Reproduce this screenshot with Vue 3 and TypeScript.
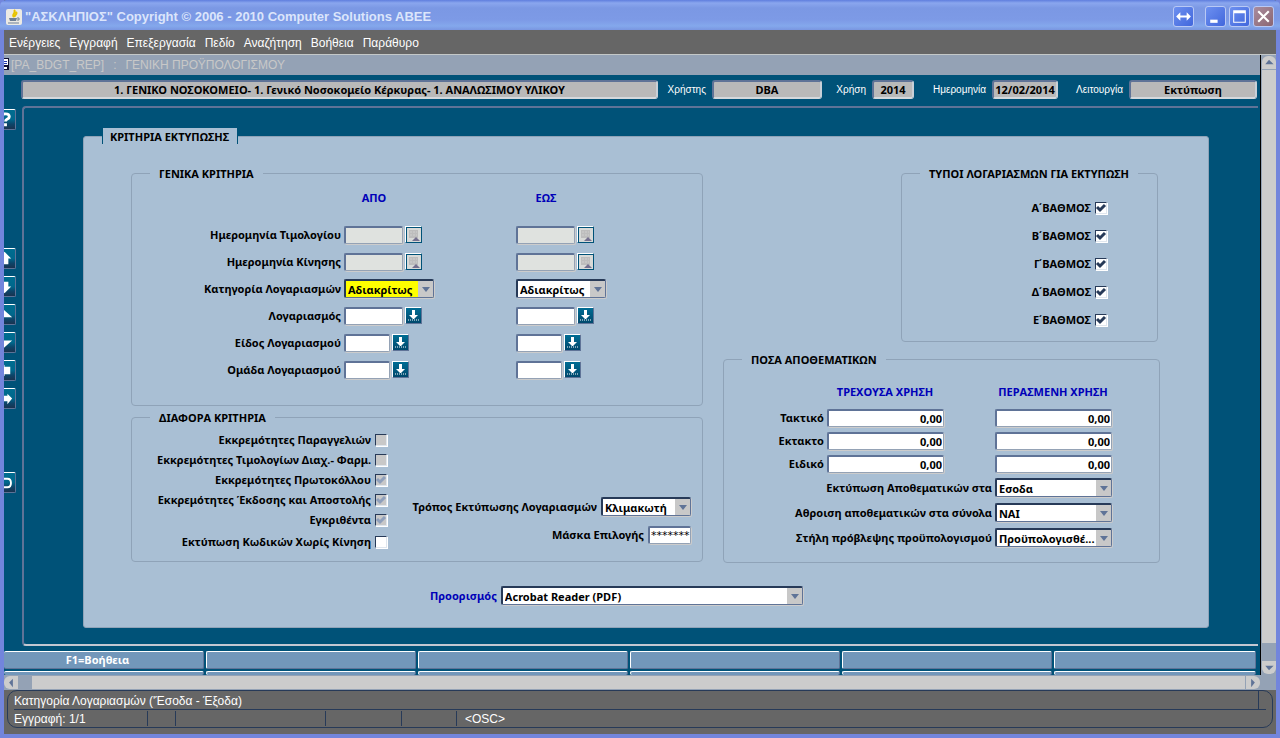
<script setup lang="ts">
import { ref } from 'vue'

interface CriteriaRow {
  id: string
  label: string
  kind: 'date' | 'combo' | 'wide' | 'narrow'
}

const menu = ['Ενέργειες', 'Εγγραφή', 'Επεξεργασία', 'Πεδίο', 'Αναζήτηση', 'Βοήθεια', 'Παράθυρο']

const tools = [
  { name: 'Προηγούμενη εγγραφή', d: 'M9 3 L16 10 H13 V16 H6 V10 H3 Z' },
  { name: 'Επόμενη εγγραφή', d: 'M9 17 L16 10 H13 V5 H6 V10 H3 Z' },
  { name: 'Προηγούμενη σελίδα', d: 'M8 5 L17 13 H3 Z' },
  { name: 'Επόμενη σελίδα', d: 'M8 16 L17 8 H3 Z' },
  { name: 'Προηγούμενο πεδίο', d: 'M3 10 L9 4 V6 H15 V14 H9 V16 Z' },
  { name: 'Επόμενο πεδίο', d: 'M17 10 L12 5 V7 H5 V13 H12 V16 Z' },
]

const sides = [
  { key: 'from', title: 'ΑΠΟ' },
  { key: 'to', title: 'ΕΩΣ' },
]

const criteria: CriteriaRow[] = [
  { id: 'invoice-date', label: 'Ημερομηνία Τιμολογίου', kind: 'date' },
  { id: 'move-date', label: 'Ημερομηνία Κίνησης', kind: 'date' },
  { id: 'category', label: 'Κατηγορία Λογαριασμών', kind: 'combo' },
  { id: 'account', label: 'Λογαριασμός', kind: 'wide' },
  { id: 'kind', label: 'Είδος Λογαριασμού', kind: 'narrow' },
  { id: 'group', label: 'Ομάδα Λογαριασμού', kind: 'narrow' },
]

const options = ref([
  { label: 'Εκκρεμότητες Παραγγελιών', on: false, locked: true },
  { label: 'Εκκρεμότητες Τιμολογίων Διαχ.- Φαρμ.', on: false, locked: true },
  { label: 'Εκκρεμότητες Πρωτοκόλλου', on: true, locked: true },
  { label: 'Εκκρεμότητες Έκδοσης και Αποστολής', on: true, locked: true },
  { label: 'Εγκριθέντα', on: true, locked: true },
  { label: 'Εκτύπωση Κωδικών Χωρίς Κίνηση', on: false, locked: false },
])

const grades = ref([
  { label: 'Α΄ΒΑΘΜΟΣ', on: true },
  { label: 'Β΄ΒΑΘΜΟΣ', on: true },
  { label: 'Γ΄ΒΑΘΜΟΣ', on: true },
  { label: 'Δ΄ΒΑΘΜΟΣ', on: true },
  { label: 'Ε΄ΒΑΘΜΟΣ', on: true },
])

const amounts = ref([
  { label: 'Τακτικό', current: '0,00', past: '0,00' },
  { label: 'Εκτακτο', current: '0,00', past: '0,00' },
  { label: 'Ειδικό', current: '0,00', past: '0,00' },
])

const reserveChoices = [
  { label: 'Εκτύπωση Αποθεματικών στα', value: 'Εσοδα' },
  { label: 'Αθροιση αποθεματικών στα σύνολα', value: 'ΝΑΙ' },
  { label: 'Στήλη πρόβλεψης προϋπολογισμού', value: 'Προϋπολογισθέ...' },
]

const mask = ref('*******')
const functionKeys = ['F1=Βοήθεια', '', '', '', '', '']
</script>

<template>
  <div class="window">
    <header class="titlebar">
      <svg class="app-icon" viewBox="0 0 16 16" aria-hidden="true">
        <rect x="0" y="0" width="16" height="16" rx="2" fill="#eceae4" />
        <path d="M8 1 C11 4 5 5 8 8 M10 3 C12 5 8 6 9 8" stroke="#e8c400" stroke-width="2" fill="none" />
        <path d="M3 9 H11 L10 12 H4 Z" fill="#6d7f96" />
        <path d="M11 9 H13 V11 H11 M2 14 H13" stroke="#6d7f96" fill="none" />
      </svg>
      <h1>"ΑΣΚΛΗΠΙΟΣ" Copyright © 2006 - 2010 Computer Solutions ABEE</h1>
      <div class="window-buttons">
        <button type="button" class="span-button" aria-label="Μετακίνηση">
          <svg viewBox="0 0 18 18"><path d="M2 9 L6 5 V8 H12 V5 L16 9 L12 13 V10 H6 V13 Z" fill="#fff" /></svg>
        </button>
        <button type="button" aria-label="Ελαχιστοποίηση">
          <svg viewBox="0 0 18 18"><rect x="4" y="12" width="7" height="3" fill="#fff" /></svg>
        </button>
        <button type="button" aria-label="Μεγιστοποίηση">
          <svg viewBox="0 0 18 18"><path d="M3 3 H15 V15 H3 Z M4 6 V14 H14 V6 Z" fill="#fff" fill-rule="evenodd" /></svg>
        </button>
        <button type="button" class="close" aria-label="Κλείσιμο">
          <svg viewBox="0 0 18 18"><path d="M4 4 L14 14 M14 4 L4 14" stroke="#fff" stroke-width="2" /></svg>
        </button>
      </div>
    </header>

    <nav class="menubar">
      <button v-for="item in menu" :key="item" type="button">{{ item }}</button>
    </nav>

    <div class="workspace">
      <main class="canvas">
        <div class="form-title">
          <svg viewBox="0 0 6 14" aria-hidden="true">
            <path d="M0 0 H5 V12 H0 Z" fill="#101030" />
            <path d="M0 1 H4 V7 H0 Z M0 9 H3 V11 H0 Z" fill="#fff" />
            <path d="M0 3 H3 V4 H0 Z M0 5 H3 V6 H0 Z" fill="#2038b0" />
          </svg>
          <span class="form-code">[PA_BDGT_REP]</span>
          <span class="form-colon">:</span>
          <span>ΓΕΝΙΚΗ ΠΡΟΫΠΟΛΟΓΙΣΜΟΥ</span>
        </div>

        <div class="context">
          <output>1. ΓΕΝΙΚΟ ΝΟΣΟΚΟΜΕΙΟ- 1. Γενικό Νοσοκομείο Κέρκυρας- 1. ΑΝΑΛΩΣΙΜΟΥ ΥΛΙΚΟΥ</output>
          <label for="ctx-user">Χρήστης</label>
          <output id="ctx-user">DBA</output>
          <label for="ctx-year">Χρήση</label>
          <output id="ctx-year">2014</output>
          <label for="ctx-date">Ημερομηνία</label>
          <output id="ctx-date">12/02/2014</output>
          <label for="ctx-mode">Λειτουργία</label>
          <output id="ctx-mode">Εκτύπωση</output>
        </div>

        <div class="body">
          <div class="toolbar">
            <button type="button" class="tool help" aria-label="Βοήθεια">
              <svg viewBox="0 0 20 20"><path d="M6 7 C6 3 14 3 14 7 C14 10 10 9 10 12 M10 14 V17" stroke="#fff" stroke-width="3" fill="none" /></svg>
            </button>
            <button v-for="tool in tools" :key="tool.name" type="button" class="tool" :aria-label="tool.name">
              <svg viewBox="0 0 20 20"><path :d="tool.d" fill="#fff" /></svg>
            </button>
            <button type="button" class="tool exit" aria-label="Έξοδος">
              <svg viewBox="0 0 20 20"><path d="M7 6 H12 C17 6 17 15 12 15 H7" stroke="#fff" stroke-width="2" fill="none" /></svg>
            </button>
          </div>

          <div class="frame">
            <form class="panel" @submit.prevent>
              <h2 class="panel-title">ΚΡΙΤΗΡΙΑ ΕΚΤΥΠΩΣΗΣ</h2>

              <div class="groups">
                <div class="column left">
                  <fieldset class="general">
                    <legend>ΓΕΝΙΚΑ ΚΡΙΤΗΡΙΑ</legend>
                    <div class="criteria heads">
                      <span></span>
                      <span v-for="side in sides" :key="side.key" class="head">{{ side.title }}</span>
                    </div>
                    <div v-for="row in criteria" :key="row.id" class="criteria">
                      <label :for="row.id + '-from'">{{ row.label }}</label>
                      <div v-for="side in sides" :key="side.key" class="entry">
                        <span v-if="row.kind === 'combo'" class="combo" :class="{ active: side.key === 'from' }">
                          <select :id="row.id + '-' + side.key" :aria-label="row.label + ' ' + side.title">
                            <option>Αδιακρίτως</option>
                          </select>
                          <svg viewBox="0 0 15 16" aria-hidden="true"><path d="M4 6 H12 L8 11 Z" /></svg>
                        </span>
                        <template v-else>
                          <input
                            :id="row.id + '-' + side.key"
                            type="text"
                            :class="row.kind"
                            :disabled="row.kind === 'date'"
                            :aria-label="row.label + ' ' + side.title"
                          />
                          <button
                            type="button"
                            class="lookup"
                            :class="{ calendar: row.kind === 'date' }"
                            :aria-label="'Επιλογή ' + row.label"
                          >
                            <svg v-if="row.kind === 'date'" viewBox="0 0 15 15">
                              <path d="M3 3 H12 V11 H3 Z" fill="#bdbdbd" />
                              <path d="M4 5 H11 M4 8 H11" stroke="#cfcfcf" stroke-dasharray="2 1" fill="none" />
                              <path d="M6 14 L10 10 L14 14 Z" fill="#75708f" />
                            </svg>
                            <svg v-else viewBox="0 0 15 15">
                              <path d="M6 2 H9 V7 H12 L8 11 H7 L3 7 H6 Z" fill="#fff" />
                              <path d="M2 12 H13" stroke="#fff" stroke-dasharray="1 1" />
                            </svg>
                          </button>
                        </template>
                      </div>
                    </div>
                  </fieldset>

                  <fieldset class="misc">
                    <legend>ΔΙΑΦΟΡΑ ΚΡΙΤΗΡΙΑ</legend>
                    <div class="misc-grid">
                      <div class="checks">
                        <label v-for="option in options" :key="option.label">
                          {{ option.label }}
                          <span class="check">
                            <input v-model="option.on" type="checkbox" :disabled="option.locked" />
                            <svg viewBox="0 0 12 12" aria-hidden="true"><path d="M2 5 L5 8 L10 3" /></svg>
                          </span>
                        </label>
                      </div>
                      <div class="print-mode">
                        <div>
                          <label for="print-mode">Τρόπος Εκτύπωσης Λογαριασμών</label>
                          <span class="combo">
                            <select id="print-mode"><option>Κλιμακωτή</option></select>
                            <svg viewBox="0 0 15 16" aria-hidden="true"><path d="M4 6 H12 L8 11 Z" /></svg>
                          </span>
                        </div>
                        <div>
                          <label for="mask">Μάσκα Επιλογής</label>
                          <input id="mask" v-model="mask" type="text" class="mask" />
                        </div>
                      </div>
                    </div>
                  </fieldset>
                </div>

                <div class="column right">
                  <fieldset class="types">
                    <legend>ΤΥΠΟΙ ΛΟΓΑΡΙΑΣΜΩΝ ΓΙΑ ΕΚΤΥΠΩΣΗ</legend>
                    <div class="checks">
                      <label v-for="grade in grades" :key="grade.label">
                        {{ grade.label }}
                        <span class="check">
                          <input v-model="grade.on" type="checkbox" />
                          <svg viewBox="0 0 12 12" aria-hidden="true"><path d="M2 5 L5 8 L10 3" /></svg>
                        </span>
                      </label>
                    </div>
                  </fieldset>

                  <fieldset class="reserves">
                    <legend>ΠΟΣΑ ΑΠΟΘΕΜΑΤΙΚΩΝ</legend>
                    <div class="amount heads">
                      <span></span>
                      <span class="head">ΤΡΕΧΟΥΣΑ ΧΡΗΣΗ</span>
                      <span class="head">ΠΕΡΑΣΜΕΝΗ ΧΡΗΣΗ</span>
                    </div>
                    <div v-for="(row, i) in amounts" :key="row.label" class="amount">
                      <label :for="'amount-' + i">{{ row.label }}</label>
                      <input :id="'amount-' + i" v-model="row.current" type="text" />
                      <input v-model="row.past" type="text" :aria-label="row.label + ' περασμένη χρήση'" />
                    </div>
                    <div v-for="(choice, i) in reserveChoices" :key="choice.label" class="amount choice">
                      <label :for="'choice-' + i">{{ choice.label }}</label>
                      <span class="combo">
                        <select :id="'choice-' + i"><option>{{ choice.value }}</option></select>
                        <svg viewBox="0 0 15 16" aria-hidden="true"><path d="M4 6 H12 L8 11 Z" /></svg>
                      </span>
                    </div>
                  </fieldset>
                </div>
              </div>

              <div class="target">
                <label for="target">Προορισμός</label>
                <span class="combo">
                  <select id="target"><option>Acrobat Reader (PDF)</option></select>
                  <svg viewBox="0 0 15 16" aria-hidden="true"><path d="M4 6 H12 L8 11 Z" /></svg>
                </span>
              </div>
            </form>
          </div>
        </div>

        <div class="fkeys">
          <button v-for="(key, i) in functionKeys" :key="i" type="button">{{ key }}</button>
        </div>
        <div class="fkeys next">
          <button v-for="(key, i) in functionKeys" :key="i" type="button" :aria-label="'Πλήκτρο ' + (i + 7)"></button>
        </div>
      </main>

      <div class="vscroll" aria-hidden="true">
        <svg class="up" viewBox="0 0 14 14"><path d="M3 9 H12 L7 4 Z" /></svg>
        <div class="vthumb"></div>
        <svg class="down" viewBox="0 0 14 14"><path d="M3 5 H12 L7 10 Z" /></svg>
      </div>
    </div>

    <div class="hscroll" aria-hidden="true">
      <svg class="prev" viewBox="0 0 14 14"><path d="M9 3 V12 L5 7 Z" /></svg>
      <div class="hthumb"></div>
      <svg class="next-arrow" viewBox="0 0 14 14"><path d="M5 3 V12 L9 7 Z" /></svg>
    </div>

    <footer class="status">
      <div class="status-box">
        <div class="hint"><span>Κατηγορία Λογαριασμών ('Έσοδα - Έξοδα)</span></div>
        <div class="cells">
          <span>Εγγραφή: 1/1</span><span></span><span></span><span></span><span></span><span>&lt;OSC&gt;</span>
        </div>
      </div>
    </footer>
  </div>
</template>

<style>
body {
  margin: 0;
}
</style>

<style scoped>
.window {
  --teal: #005278;
  --panel: #a9bfd4;
  --steel: #5f7397;
  --haze: #94a2b5;
  --navy: #273a58;
  --silver: #cccccc;
  --ui: "Noto Sans", "DejaVu Sans Condensed", sans-serif;
  --thin: "Liberation Sans", Arial, sans-serif;
  display: flex;
  flex-direction: column;
  box-sizing: border-box;
  min-height: 100vh;
  border: 4px solid #7285dc;
  border-top: 0;
  background: #666;
  font: bold 11px/14px var(--ui);
  color: #000;
}
button,
input,
select {
  font: inherit;
  color: inherit;
  box-sizing: border-box;
  margin: 0;
  padding: 0;
}
button {
  border: 0;
}
svg {
  display: block;
}

.titlebar {
  display: flex;
  align-items: center;
  height: 30px;
  margin: 0 -4px;
  padding: 3px 6px 0;
  box-sizing: border-box;
  border-radius: 6px 6px 0 0;
  background: linear-gradient(#5f7ede 0, #8aa6ee 3px, #7b98e4 8px, #7d9ae6 20px, #84a8ec 26px, #7a96e0);
}
.app-icon {
  width: 16px;
  height: 16px;
}
h1 {
  flex: 1;
  margin: 0 0 0 3px;
  font: bold 13px/18px "Liberation Sans", Arial, sans-serif;
  color: #dbe5fb;
  white-space: nowrap;
}
.window-buttons {
  display: flex;
  gap: 3px;
}
.window-buttons button {
  width: 21px;
  height: 21px;
  border: 1px solid #b9c9f5;
  border-radius: 3px;
  background: linear-gradient(135deg, #6d90f0, #4167dc);
}
.window-buttons .span-button {
  margin-right: 8px;
}
.window-buttons .close {
  background: linear-gradient(135deg, #a98c9e, #8b6672);
}

.menubar {
  display: flex;
  gap: 9px;
  height: 24px;
  padding-left: 5px;
  border-bottom: 1px solid #c4c8c8;
  background: #666;
}
.menubar button {
  background: none;
  font: 12px/26px var(--thin);
  color: #fff;
}

.workspace {
  display: flex;
  flex: 1;
}
.canvas {
  display: flex;
  flex: 1;
  flex-direction: column;
  min-width: 0;
  overflow: hidden;
  border-right: 1px solid #000;
  background: var(--teal);
}
.form-title {
  display: flex;
  align-items: center;
  height: 20px;
  background: var(--haze);
  font: 12px/22px var(--thin);
  color: #c8c8c8;
}
.form-title svg {
  width: 6px;
  height: 14px;
}
.form-code {
  margin: 0 9px 0 1px;
}
.form-colon {
  margin-right: 9px;
}

.context {
  display: grid;
  grid-template-columns: minmax(0, 1fr) 42px 110px 38px 42px 66px 66px 59px 128px;
  gap: 6px;
  align-items: center;
  padding: 5px 3px 7px 17px;
}
.context output {
  box-sizing: border-box;
  height: 19px;
  border: 2px solid;
  border-color: var(--steel) #c8d0d8 #d4d8dc var(--steel);
  border-radius: 3px;
  background: #b9b9b9;
  line-height: 16px;
  text-align: center;
  white-space: nowrap;
}
.context label {
  font: 10px/14px var(--thin);
  color: #fff;
  text-align: right;
  white-space: nowrap;
}

.body {
  display: flex;
  flex: 1;
}
.toolbar {
  display: flex;
  flex-direction: column;
  align-items: flex-end;
  gap: 7px;
  width: 12px;
  margin-right: 6px;
  padding-top: 3px;
  overflow: hidden;
}
.tool {
  flex: none;
  width: 21px;
  height: 21px;
  border: 1px solid;
  border-color: #fff var(--steel) var(--steel) #fff;
  border-radius: 2px;
  background: linear-gradient(#006d90 0, #00678c 50%, #0d4468 75%, #1a3350);
}
.tool svg {
  width: 19px;
  height: 19px;
}
.help {
  margin-bottom: 111px;
}
.exit {
  margin-top: 56px;
}
.frame {
  flex: 1;
  min-width: 0;
  margin-right: 2px;
  padding: 28px 49px 16px 59px;
  border: 2px solid;
  border-color: var(--steel) transparent #c3c8d2 var(--steel);
  border-right: 0;
  border-radius: 4px 0 0 4px;
}
.panel {
  box-sizing: border-box;
  border: 1px solid #8fa3b8;
  border-radius: 3px;
  background: var(--panel);
  padding: 0 48px 22px 47px;
}
.panel-title {
  width: max-content;
  margin: -9px 0 22px -29px;
  padding: 2px 8px 0 7px;
  border: solid var(--teal);
  border-width: 0 1px;
  background: var(--panel);
  font: inherit;
}

.groups {
  display: grid;
  grid-template-columns: minmax(0, 572fr) minmax(0, 437fr);
  gap: 20px;
}
.column {
  display: flex;
  flex-direction: column;
}
.left {
  gap: 4px;
}
.right {
  gap: 10px;
}
fieldset {
  min-width: 0;
  margin: 0;
  padding: 0;
  border: 1px solid #8fa3b8;
  border-radius: 4px;
}
legend {
  margin-left: 18px;
  padding: 1px 9px 0;
}
label {
  text-align: right;
  white-space: nowrap;
}
.head {
  color: #0000b8;
  text-align: center;
  white-space: nowrap;
}

input[type="text"] {
  height: 18px;
  border: 2px solid;
  border-color: var(--steel) var(--haze) var(--haze) var(--steel);
  border-width: 2px 1px 1px 2px;
  border-radius: 2px;
  background: #fff;
  box-shadow: 1px 1px 0 var(--silver);
}
input[type="text"]:disabled {
  background: #dfe2df;
}
.wide,
.date {
  width: 59px;
}
.narrow {
  width: 46px;
}
.combo {
  position: relative;
  display: block;
  width: 90px;
}
.combo select {
  display: block;
  width: 100%;
  height: 19px;
  padding: 1px 16px 0 2px;
  appearance: none;
  border: 2px solid;
  border-color: var(--navy) var(--steel) var(--steel) var(--navy);
  border-width: 2px 1px 1px 2px;
  border-radius: 2px;
  background: #fff;
  box-shadow: 1px 1px 0 var(--silver);
}
.combo.active select {
  background: #ff0;
}
.combo svg {
  position: absolute;
  top: 2px;
  right: 1px;
  width: 15px;
  height: 16px;
  background: #c8c8c8;
  fill: var(--steel);
  pointer-events: none;
}
.lookup {
  width: 17px;
  height: 17px;
  border: 1px solid;
  border-color: #fff var(--steel) var(--steel) #fff;
  background: linear-gradient(#006d94, #00486c);
}
.lookup.calendar {
  border-color: #fff var(--teal) var(--teal) #fff;
  background: #d8dad8;
  box-shadow: inset 1px 1px 0 var(--teal);
}
.lookup svg {
  width: 15px;
  height: 15px;
}

.general {
  padding-bottom: 22px;
}
.criteria {
  display: grid;
  grid-template-columns: minmax(0, 212fr) minmax(0, 172fr) minmax(0, 186fr);
  align-items: center;
  height: 27px;
}
.criteria label {
  padding-right: 3px;
}
.criteria.heads {
  height: 34px;
  margin-bottom: 6px;
}
.criteria .head {
  width: 60px;
}
.entry {
  display: flex;
  align-items: center;
  gap: 2px;
}

.misc-grid {
  display: flex;
  justify-content: space-between;
  padding: 5px 11px 9px 0;
}
.checks label {
  display: flex;
  align-items: center;
  justify-content: flex-end;
  gap: 4px;
  height: 20px;
}
.misc .checks {
  width: 255px;
}
.misc .checks label:last-child {
  margin-top: 2px;
}
.check {
  position: relative;
}
.check input {
  display: block;
  width: 12px;
  height: 12px;
  appearance: none;
  border: 1px solid;
  border-color: var(--navy) #dfe6ee #dfe6ee var(--navy);
  background: #fff;
  box-shadow: 1px 1px 0 #fff;
}
.check input:disabled {
  background: #c8c8c8;
}
.check svg {
  position: absolute;
  inset: 0;
  width: 12px;
  height: 12px;
  fill: none;
  stroke: var(--navy);
  stroke-width: 3;
  visibility: hidden;
  pointer-events: none;
}
.check input:disabled + svg {
  stroke: #8fa0bc;
}
.check input:checked + svg {
  visibility: visible;
}
.print-mode {
  display: flex;
  flex-direction: column;
  justify-content: flex-end;
  gap: 10px;
  padding-bottom: 8px;
}
.print-mode div {
  display: flex;
  align-items: center;
  justify-content: flex-end;
  gap: 4px;
}
.mask {
  width: 43px;
}
input.mask {
  padding-left: 1px;
  font: 11px/14px "DejaVu Sans", sans-serif;
}

.types {
  width: 257px;
  box-sizing: border-box;
  margin: 0 2px 0 auto;
}
.types .checks {
  padding: 13px 50px 7px 0;
}
.types .checks label {
  height: 28px;
}
.reserves {
  padding: 0 47px 12px 0;
}
.amount {
  display: grid;
  grid-template-columns: minmax(0, 1fr) 168px 117px;
  align-items: center;
  height: 23px;
}
.amount input {
  width: 117px;
  padding-right: 1px;
  text-align: right;
}
.amount label {
  padding-right: 3px;
}
.amount.heads {
  height: 24px;
  margin: 13px 0 2px;
}
.amount .head {
  width: 116px;
}
.amount.choice {
  height: 25px;
}
.choice label {
  grid-column: span 2;
}
.choice .combo {
  width: 117px;
}
.choice select {
  padding-right: 0;
}

.target {
  display: flex;
  align-items: center;
  gap: 4px;
  margin: 23px 0 0 299px;
  color: #0000b8;
}
.target .combo {
  width: 302px;
  color: #000;
}

.fkeys {
  display: grid;
  grid-template-columns: 200fr 210fr 210fr 210fr 210fr 202fr;
  gap: 2px;
  padding: 5px 4px 0 0;
}
.fkeys button {
  height: 18px;
  border: 1px solid;
  border-color: #fff var(--steel) var(--steel) #fff;
  border-radius: 2px;
  background: #7297ba;
  color: #fff;
}
.fkeys button:first-child {
  border-left: 0;
  padding-right: 12px;
}
.fkeys.next {
  padding-top: 2px;
}
.fkeys.next button {
  height: 4px;
  border-bottom: 0;
}

.vscroll {
  display: flex;
  flex-direction: column;
  width: 15px;
  padding: 1px 0;
  background: var(--haze);
}
.vscroll svg {
  width: 14px;
  height: 13px;
  margin-left: 1px;
  background: var(--silver);
  fill: var(--steel);
}
.vscroll .up {
  border-radius: 6px 6px 0 0;
}
.vscroll .down {
  border-radius: 0 0 6px 6px;
}
.vthumb {
  flex: 1;
  margin: 1px 0 18px 1px;
  background: var(--silver);
}
.hscroll {
  display: flex;
  height: 13px;
  padding: 1px 16px 1px 0;
  background: var(--haze);
}
.hscroll svg {
  width: 14px;
  height: 13px;
  background: var(--silver);
  fill: var(--steel);
}
.hscroll .prev {
  border-radius: 6px 0 0 6px;
}
.hscroll .next-arrow {
  border-radius: 0 6px 6px 0;
}
.hthumb {
  flex: 1;
  margin: 0 1px 0 14px;
  background: var(--silver);
}

.status {
  padding: 0 3px 6px;
  background: #666;
  font: 12px/18px var(--thin);
  color: #fff;
}
.status-box {
  padding: 0 6px;
  border: 1px solid var(--navy);
  border-radius: 10px;
}
.hint {
  border-bottom: 1px solid var(--navy);
  padding-right: 7px;
}
.hint span {
  display: block;
  height: 18px;
  border-right: 1px solid var(--navy);
  line-height: 20px;
}
.cells {
  display: grid;
  grid-template-columns: 133px 28px 150px 76px 55px minmax(0, 1fr);
  height: 17px;
}
.cells span {
  height: 15px;
  margin-top: 1px;
  line-height: 16px;
}
.cells span + span {
  border-left: 1px solid var(--navy);
}
.cells span:last-child {
  padding-left: 8px;
}
</style>
